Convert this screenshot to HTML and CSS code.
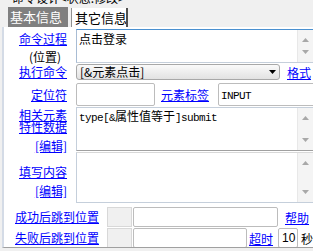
FILE: index.html
```html
<!DOCTYPE html>
<html lang="zh">
<head>
    <meta charset="UTF-8">
    <title>命令设计</title>
    <link rel="stylesheet" href="styles.css">
</head>
<body>
    <div class="title"><span>命令设计&lt;状态:修改&gt;</span></div>

    <div class="tabs">
        <div class="tab active">基本信息</div>
        <div class="tab">其它信息</div>
    </div>

    <div class="panel">
        <!-- 命令过程 -->
        <div class="row r-proc">
            <div class="lbl">
                <a href="#">命令过程</a>
                <span class="sub">(位置)</span>
            </div>
            <div class="memo focus">
                <div class="memo-text">点击登录</div>
                <div class="vbar">
                    <svg width="7" height="4"><path d="M0 4 L3.5 0 L7 4 Z"/></svg>
                    <svg width="7" height="4"><path d="M0 0 L3.5 4 L7 0 Z"/></svg>
                </div>
            </div>
        </div>

        <!-- 执行命令 -->
        <div class="row r-cmd">
            <div class="lbl"><a href="#">执行命令</a></div>
            <div class="select">
                <span>[&amp;元素点击]</span>
                <svg width="7" height="4"><path d="M0 0 L3.5 4 L7 0 Z"/></svg>
            </div>
            <a href="#" class="side-link">格式</a>
        </div>

        <!-- 定位符 -->
        <div class="row r-loc">
            <div class="lbl"><a href="#">定位符</a></div>
            <div class="inp inp-loc"></div>
            <a href="#" class="tag-link">元素标签</a>
            <div class="inp inp-tag"><span class="mono">INPUT</span></div>
        </div>

        <!-- 相关元素特性数据 -->
        <div class="row r-attr">
            <div class="lbl lbl-top">
                <a href="#">相关元素</a>
                <a href="#">特性数据</a>
                <a href="#" class="edit">[编辑]</a>
            </div>
            <div class="memo memo-attr">
                <div class="memo-text"><span class="mono">type[&amp;</span>属性值等于<span class="mono">]submit</span></div>
                <div class="vbar">
                    <svg width="7" height="4"><path d="M0 4 L3.5 0 L7 4 Z"/></svg>
                    <svg width="7" height="4"><path d="M0 0 L3.5 4 L7 0 Z"/></svg>
                </div>
            </div>
        </div>

        <!-- 填写内容 -->
        <div class="row r-fill">
            <div class="lbl lbl-top">
                <a href="#">填写内容</a>
                <a href="#" class="edit">[编辑]</a>
            </div>
            <div class="memo memo-fill">
                <div class="memo-text"></div>
                <div class="vbar">
                    <svg width="7" height="4"><path d="M0 4 L3.5 0 L7 4 Z"/></svg>
                    <svg width="7" height="4"><path d="M0 0 L3.5 4 L7 0 Z"/></svg>
                </div>
            </div>
        </div>

        <!-- 跳转 -->
        <div class="row r-jump">
            <a href="#" class="jump-lbl">成功后跳到位置</a>
            <div class="gbox"></div>
            <div class="inp inp-ok"></div>
            <a href="#" class="help-link">帮助</a>
        </div>

        <div class="row r-jump r-fail">
            <a href="#" class="jump-lbl">失败后跳到位置</a>
            <div class="gbox"></div>
            <div class="inp inp-fail"></div>
            <a href="#" class="timeout-link">超时</a>
            <div class="inp inp-sec">10</div>
            <span class="sec">秒</span>
        </div>
    </div>
</body>
</html>
```

FILE: styles.css
```css
body {
    margin: 0;
    width: 313px;
    height: 251px;
    overflow: hidden;
    background: #f0f0f0;
    font-family: "Noto Sans CJK SC", sans-serif;
    font-size: 12px;
    color: #000;
    white-space: nowrap;
}

a {
    color: #0000ff;
    text-decoration: underline;
}

.mono {
    font-family: "Liberation Mono", monospace;
    font-size: 11px;
    letter-spacing: -0.6px;
}

.title {
    height: 7px;
    overflow: hidden;
    padding-left: 12px;
}

.title span {
    display: block;
    margin-top: -10px;
    line-height: 16px;
}

.tabs {
    display: flex;
    height: 20px;
    padding-left: 8px;
}

.tab {
    font-size: 13px;
    line-height: 19px;
    box-sizing: border-box;
    width: 57px;
    margin-left: 3px;
    padding-left: 3px;
    background: #fff;
    border-left: 1px solid #909090;
    border-right: 2px solid #505050;
    margin-top: 1px;
    overflow: hidden;
}

.tab.active {
    width: 60px;
    margin-left: 0;
    margin-top: 0;
    line-height: 20px;
    padding-left: 2px;
    background: #808080;
    color: #fff;
    border: none;
}

.panel {
    margin-left: 2px;
    border-left: 2px solid #d4dbe6;
    border-bottom: 1px solid #a0a0a0;
    background: #fff;
    height: 221px;
    box-sizing: border-box;
    overflow: hidden;
}

.row {
    display: flex;
}

.lbl {
    width: 63px;
    margin-right: 9px;
    flex-shrink: 0;
    text-align: right;
    line-height: 12px;
    align-self: center;
}

.lbl a,
.lbl span {
    display: block;
}

.lbl-top {
    align-self: flex-start;
}

/* memo boxes */
.memo {
    flex: 1;
    display: flex;
    box-sizing: border-box;
    border: 1px solid #c5cfdb;
    border-right: none;
}

.memo-text {
    flex: 1;
    padding: 2px 2px;
    line-height: 14px;
}

.vbar {
    width: 15px;
    background: #f4f4f4;
    border-left: 1px solid #e8e8e8;
    display: flex;
    flex-direction: column;
    justify-content: space-between;
    align-items: center;
    padding: 8px 0;
}

.vbar svg {
    fill: #a8a8a8;
}

.r-proc {
    margin-top: 2px;
    height: 34px;
}

.r-proc .lbl {
    align-self: flex-start;
    padding-top: 4px;
}

.r-proc .sub {
    margin-top: 6px;
    padding-right: 6px;
}

.memo.focus {
    border-top-color: #4a90d0;
    border-left-color: #a8bcd4;
}

.r-cmd {
    margin-top: 1px;
    height: 16px;
    align-items: center;
}

.select {
    width: 204px;
    height: 16px;
    box-sizing: border-box;
    border: 1px solid #a8a8a8;
    border-radius: 3px;
    background: linear-gradient(#fafafa, #e2e2e2);
    display: flex;
    align-items: center;
    justify-content: space-between;
    padding: 0 3px 0 3px;
    line-height: 14px;
}

.side-link {
    margin-left: 7px;
}

.r-loc {
    margin-top: 3px;
    height: 23px;
    align-items: center;
}

.inp {
    box-sizing: border-box;
    border: 1px solid #bcbcbc;
    border-radius: 2px;
    background: #fff;
    height: 100%;
    flex-shrink: 0;
}

.inp-loc {
    width: 79px;
}

.tag-link {
    margin-left: 6px;
}

.inp-tag {
    flex: 1;
    margin-left: 9px;
    margin-right: -3px;
    padding-left: 2px;
    line-height: 20px;
}

.r-attr {
    margin-top: 1px;
    height: 44px;
}

.r-attr .lbl {
    padding-top: 2px;
}

.memo-attr {
    border-bottom-color: #a0a0a0;
}

.memo-attr .memo-text {
    padding-top: 1px;
}

.edit {
    margin-top: 7px;
}

.r-fill {
    margin-top: 1px;
    height: 51px;
}

.r-fill .lbl {
    padding-top: 14px;
}

.memo-fill {
    border-top-color: #d8d8d8;
}

.r-jump {
    margin-top: 4px;
    height: 20px;
    align-items: center;
}

.r-fail {
    margin-top: 1px;
}

.jump-lbl {
    margin-left: 11px;
    width: 84px;
    flex-shrink: 0;
    line-height: 12px;
}

.gbox {
    width: 25px;
    height: 100%;
    flex-shrink: 0;
    box-sizing: border-box;
    margin-left: 8px;
    background: #f0f0f0;
    border: 1px solid #d8d8d8;
}

.inp-ok {
    width: 145px;
    margin-left: 1px;
}

.help-link {
    margin-left: 7px;
}

.inp-fail {
    width: 114px;
    margin-left: 1px;
}

.timeout-link {
    margin-left: 2px;
}

.inp-sec {
    width: 20px;
    margin-left: 5px;
    font-family: "Liberation Sans", sans-serif;
    line-height: 18px;
    padding-left: 3px;
}

.sec {
    margin-left: 3px;
}
```
